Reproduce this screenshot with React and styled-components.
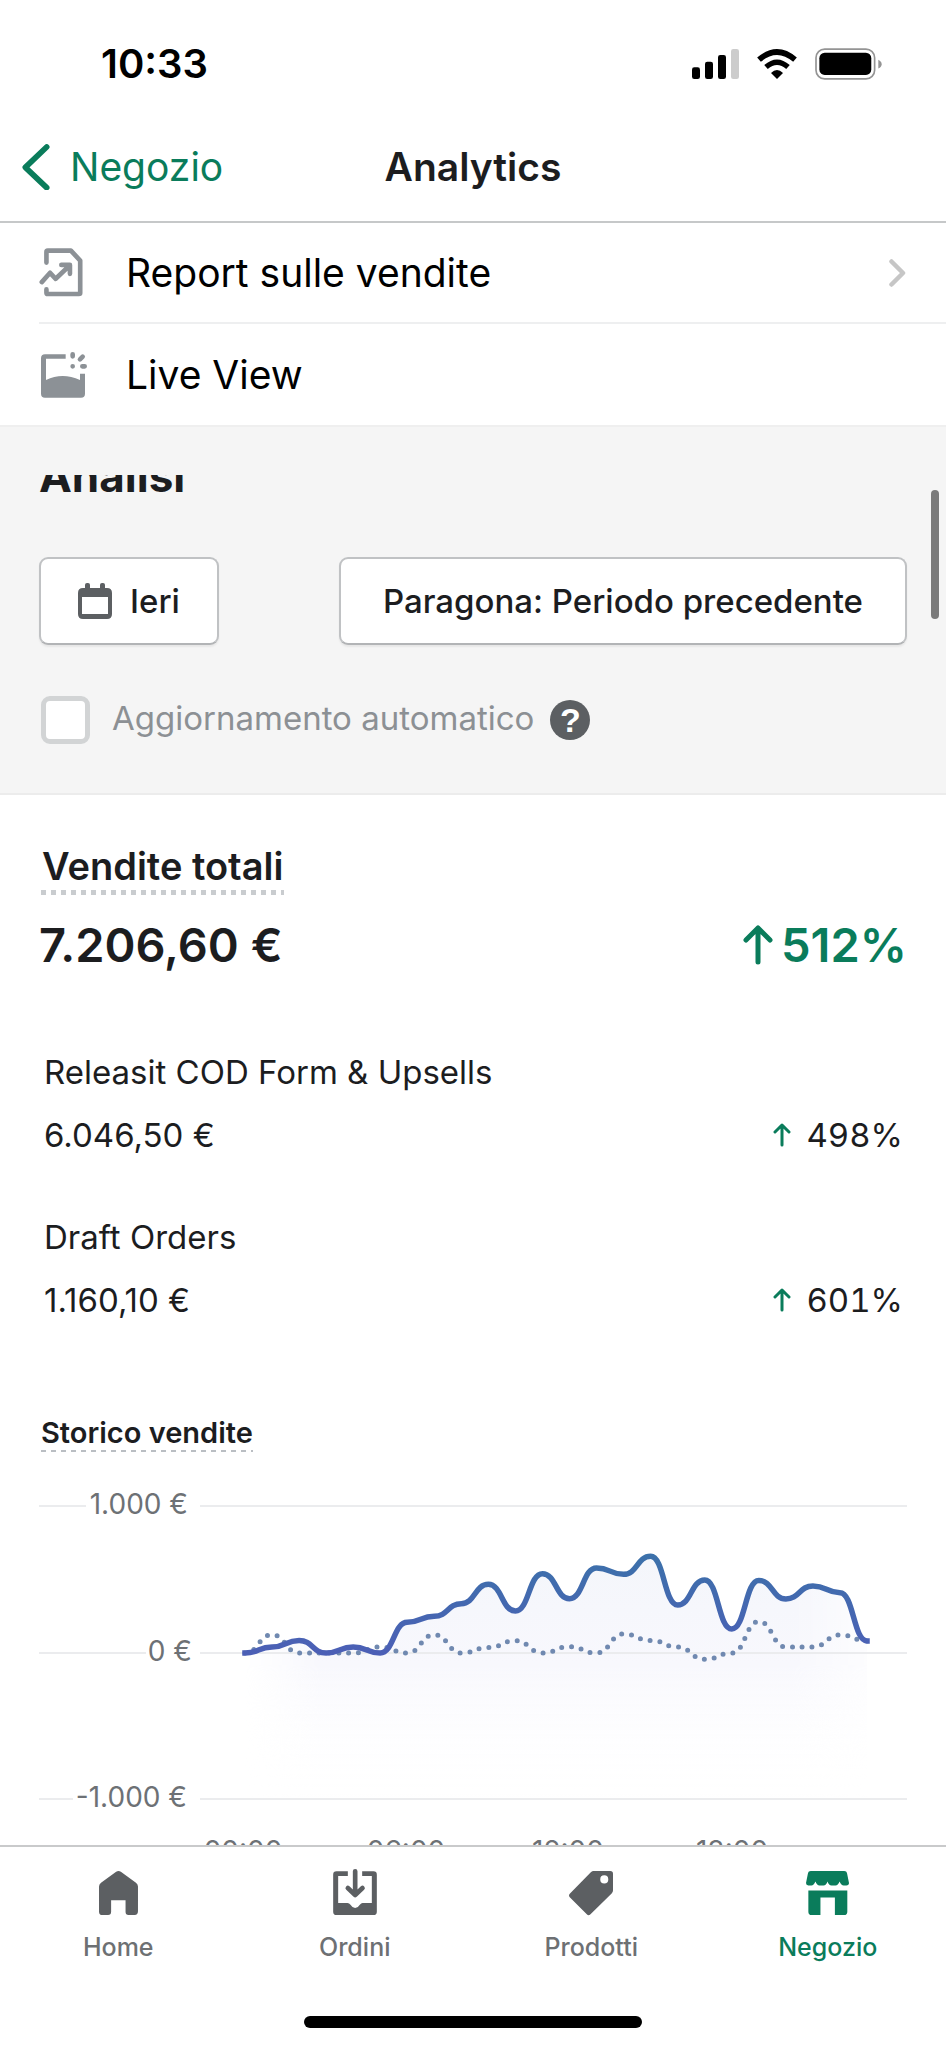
import React from "react";
import styled, { createGlobalStyle, css } from "styled-components";

const GlobalStyle = createGlobalStyle`
  *, *::before, *::after { box-sizing: border-box; }
  body { margin: 0; background: #fff; }
  h1, h2, h3, p, dl, dd, dt, ul { margin: 0; padding: 0; font: inherit; }
  button { font: inherit; color: inherit; cursor: pointer; }
  svg { display: block; flex: none; }
`;

const GREEN = "#0a7c5b";
const INK = "#1c1d1f";
const ICON = "#5c5f62";

const Screen = styled.div`
  height: 100vh;
  display: flex;
  flex-direction: column;
  background: #fff;
  color: ${INK};
  font-family: Inter, "Liberation Sans", sans-serif;
  overflow: hidden;
`;

const StatusBar = styled.div`
  flex: none;
  height: 113px;
  padding: 14px 64px 0 101px;
  display: flex;
  align-items: center;
  justify-content: space-between;
  color: #000;
`;

const Clock = styled.time`
  font-size: 40px;
  font-weight: 600;
  line-height: 48px;
`;

const StatusIcons = styled.div`
  display: flex;
  align-items: center;
  gap: 18px;
`;

const NavBar = styled.header`
  flex: none;
  height: 110px;
  padding: 0 22px;
  display: grid;
  grid-template-columns: 1fr auto 1fr;
  align-items: center;
  border-bottom: 2px solid #c6c8c9;
  font-size: 39px;
  line-height: 48px;
`;

const BackLink = styled.a`
  display: flex;
  align-items: center;
  gap: 18px;
  color: ${GREEN};
  text-decoration: none;
`;

const NavTitle = styled.h1`
  font-weight: 600;
`;

const Main = styled.main`
  position: relative;
  flex: 1;
  min-height: 0;
  overflow: hidden;
`;

const ScrollThumb = styled.div`
  position: absolute;
  top: 267px;
  right: 7px;
  width: 8px;
  height: 129px;
  border-radius: 4px;
  background: #7b7b7b;
`;

const MenuRow = styled.a`
  margin-left: 39px;
  height: 101px;
  padding-right: 40px;
  display: grid;
  grid-template-columns: 87px 1fr auto;
  align-items: center;
  border-bottom: ${(p) => (p.$last ? "0" : "2px solid #eeeff0")};
  color: #000;
  text-decoration: none;
  font-size: 39px;
  line-height: 48px;
`;

const FilterPanel = styled.section`
  padding: 50px 39px 49px;
  background: #f5f5f5;
  border-bottom: 2px solid #ececec;
  box-shadow: inset 0 2px #efefef;
`;

const ClippedHeading = styled.div`
  height: 25px;
  display: flex;
  align-items: flex-end;
  overflow: hidden;
  margin-bottom: 57px;
`;

const PanelTitle = styled.h2`
  font-size: 44px;
  font-weight: 700;
  line-height: 48px;
`;

const ButtonRow = styled.div`
  display: flex;
  justify-content: space-between;
`;

const FilterButton = styled.button`
  height: 88px;
  padding: 0 ${(p) => (p.$wide ? 42 : 37)}px;
  display: flex;
  align-items: center;
  gap: 18px;
  background: #fff;
  border: 2px solid #c0c2c4;
  border-bottom-color: #b2b4b6;
  border-radius: 9px;
  box-shadow: 0 2px 2px rgba(0, 0, 0, 0.06);
  font-size: 33px;
  font-weight: 500;
  line-height: 40px;
`;

const AutoRefresh = styled.div`
  margin-top: 51px;
  height: 48px;
  padding-left: 2px;
  display: flex;
  align-items: center;
`;

const Checkbox = styled.input`
  appearance: none;
  flex: none;
  width: 49px;
  height: 48px;
  margin: 0 22px 0 0;
  background: #fff;
  border: 5px solid #d2d4d5;
  border-radius: 9px;
`;

const CheckLabel = styled.label`
  padding-bottom: 4px;
  color: #8c9094;
  font-size: 33px;
  line-height: 40px;
`;

const HelpButton = styled.button`
  width: 40px;
  height: 40px;
  margin-left: 16px;
  padding: 0;
  border: 0;
  border-radius: 50%;
  background: ${ICON};
  color: #fff;
  font-family: "Liberation Sans", sans-serif;
  font-size: 34px;
  font-weight: 700;
  line-height: 40px;
`;

const Report = styled.section`
  padding: 47px 39px 0;
`;

const ReportTitle = styled.h2`
  width: fit-content;
  margin-left: 2px;
  padding: 0 1px 5px;
  font-size: 38px;
  font-weight: 600;
  line-height: 48px;
  background: repeating-linear-gradient(90deg, #c9cccf 0 5px, transparent 5px 10px) left bottom / 100% 5px no-repeat;
`;

const Split = styled.div`
  display: flex;
  justify-content: space-between;
  align-items: center;
`;

const Total = styled(Split)`
  margin-top: 22px;
  font-size: 47px;
  font-weight: 600;
  line-height: 56px;
`;

const Change = styled.span`
  display: flex;
  align-items: center;
  gap: ${(p) => (p.$large ? 8 : 15)}px;
  font-variant-numeric: ${(p) => (p.$large ? "normal" : "tabular-nums")};
  ${(p) => p.$large && css`color: ${GREEN};`}
`;

const Channels = styled.dl`
  margin-top: 79px;
  padding: 0 4px 0 5px;
  display: grid;
  gap: 62px;
  font-size: 33px;
  line-height: 40px;
`;

const ChannelAmounts = styled.dd`
  display: flex;
  justify-content: space-between;
  padding-top: 23px !important;
`;

const ChartTitle = styled.h3`
  width: fit-content;
  margin: 96px 0 28px 2px;
  padding-bottom: 2px;
  font-size: 29px;
  font-weight: 600;
  line-height: 34px;
  background: repeating-linear-gradient(90deg, #babec3 0 5px, transparent 5px 10px) left bottom / 100% 2px no-repeat;
`;

const ChartSvg = styled.svg`
  width: 100%;
  height: auto;
  overflow: visible;
`;

const AxisText = styled.text`
  fill: #6d7175;
  font-size: 28px;
  text-anchor: ${(p) => p.$anchor || "start"};
`;

const TabBar = styled.nav`
  flex: none;
  padding-bottom: 20px;
  border-top: 2px solid #c9cacb;
  background: #fff;
`;

const Tabs = styled.div`
  display: grid;
  grid-template-columns: repeat(4, 1fr);
`;

const Tab = styled.a`
  padding-top: 21px;
  display: flex;
  flex-direction: column;
  align-items: center;
  gap: 16px;
  color: ${(p) => (p.$active ? GREEN : ICON)};
  text-decoration: none;
  font-size: 25px;
  font-weight: 500;
  line-height: 30px;
`;

const TabLabel = styled.span`
  color: ${(p) => (p.$active ? GREEN : "#6d7073")};
`;

const TabIcon = styled.span`
  height: 48px;
  display: flex;
  align-items: flex-end;
`;

const HomeIndicator = styled.div`
  width: 338px;
  height: 12px;
  margin: 54px auto 0;
  border-radius: 6px;
  background: #000;
`;

function SignalIcon() {
  return (
    <svg width="47" height="30" viewBox="0 0 141 90" aria-hidden="true">
      <rect x="0" y="55" width="24" height="35" rx="7" />
      <rect x="39" y="38" width="24" height="52" rx="7" />
      <rect x="78" y="18" width="24" height="72" rx="7" />
      <rect x="117" y="0" width="24" height="90" rx="7" fill="#ccc" />
    </svg>
  );
}

function WifiIcon() {
  return (
    <svg width="40" height="30" viewBox="0 0 120 90" fill="none" stroke="#000" aria-hidden="true">
      <path d="M6 32Q60 -14 114 32" strokeWidth="17" />
      <path d="M27 54Q60 25 93 54" strokeWidth="16" />
      <path d="M60 90L42 72Q60 54 78 72Z" fill="#000" stroke="none" />
    </svg>
  );
}

function BatteryIcon() {
  return (
    <svg width="67" height="32" viewBox="0 0 200 95" aria-hidden="true">
      <rect x="3" y="3" width="175" height="89" rx="26" fill="none" stroke="#949494" strokeWidth="5" />
      <rect x="13" y="14" width="155" height="66" rx="16" />
      <path d="M189 35Q199 40 199 48Q199 56 189 61Z" fill="#949494" />
    </svg>
  );
}

function BackIcon() {
  return (
    <svg width="30" height="46" viewBox="0 0 90 138" fill="none" stroke="currentColor" strokeWidth="17" strokeLinecap="round" strokeLinejoin="round" aria-hidden="true">
      <path d="M74 9L10 70L74 131" />
    </svg>
  );
}

function DisclosureIcon() {
  return (
    <svg width="17" height="28" viewBox="0 0 17 28" fill="none" stroke="#c6c6c6" strokeWidth="4.5" strokeLinecap="round" strokeLinejoin="round" aria-hidden="true">
      <path d="M2.5 2.5L14 14L2.5 25.5" />
    </svg>
  );
}

function ReportIcon() {
  return (
    <svg width="44" height="49" viewBox="0 0 132 148" fill="none" stroke="#8c9196" strokeWidth="14" strokeLinecap="round" strokeLinejoin="round" aria-hidden="true">
      <path d="M22 44V12Q22 8 26 8H96L124 38V136Q124 139 120 139H26Q22 139 22 135V125" />
      <path d="M8 103L33 75L50 93L92 53M67 51H93V78" />
    </svg>
  );
}

function LiveViewIcon() {
  return (
    <svg width="48" height="46" viewBox="-6 0 144 138" fill="#8c9196" aria-hidden="true">
      <path d="M0 19Q0 7 12 7H74V20H15V84Q64 60 117 84V65H132V125Q132 137 120 137H12Q0 137 0 125Z" />
      <path d="M95 7V13M95 43V43M117 22L125 14M124 43H131" stroke="#8c9196" strokeWidth="14" strokeLinecap="round" />
    </svg>
  );
}

function CalendarIcon() {
  return (
    <svg width="34" height="36" viewBox="0 0 34 36" fill={ICON} aria-hidden="true">
      <path fillRule="evenodd" d="M5 5H29Q34 5 34 10V31Q34 36 29 36H5Q0 36 0 31V10Q0 5 5 5ZM4 14V31H30V14Z" />
      <rect x="7" y="0" width="5" height="9" rx="2" />
      <rect x="22" y="0" width="5" height="9" rx="2" />
    </svg>
  );
}

function ArrowUp({ large }) {
  return large ? (
    <svg width="30" height="40" viewBox="0 0 30 40" fill="none" stroke={GREEN} strokeWidth="5" strokeLinecap="round" strokeLinejoin="round" aria-hidden="true">
      <path d="M15 37V3M3 15L15 3L27 15" />
    </svg>
  ) : (
    <svg width="18" height="24" viewBox="0 0 18 24" fill="none" stroke={GREEN} strokeWidth="3" strokeLinecap="round" strokeLinejoin="round" aria-hidden="true">
      <path d="M9 22V2M2 9L9 2L16 9" />
    </svg>
  );
}

function HomeIcon() {
  return (
    <svg width="39" height="45" viewBox="0 0 116 134" fill="currentColor" aria-hidden="true">
      <path d="M51 2Q58 -2 65 2L110 35Q116 40 116 46V120Q116 131 106 131H88Q79 131 79 122V87H36V122Q36 131 27 131H10Q0 131 0 121V46Q0 40 6 35Z" />
    </svg>
  );
}

function OrdersIcon() {
  return (
    <svg width="44" height="47" viewBox="0 0 131 141" fill="currentColor" aria-hidden="true">
      <path d="M44 7H10Q0 7 0 17V128Q0 138 10 138H121Q131 138 131 128V17Q131 7 121 7H87V21H116V102H88Q84 102 80 107Q74 117 66 117Q58 117 52 107Q48 102 43 102H15V21H44Z" />
      <path d="M66 7V78M44 57L66 78L88 57" fill="none" stroke="currentColor" strokeWidth="14" strokeLinecap="round" strokeLinejoin="round" />
    </svg>
  );
}

function ProductsIcon() {
  return (
    <svg width="44" height="45" viewBox="0 0 131 134" fill="currentColor" aria-hidden="true">
      <path fillRule="evenodd" d="M73 0H123Q131 0 131 8V58Q131 63 127 67L64 129Q58 134 53 129L3 79Q-3 73 3 67L65 4Q69 0 73 0ZM105 13A12 12 0 1 0 105 37A12 12 0 1 0 105 13Z" />
    </svg>
  );
}

function StoreIcon() {
  return (
    <svg width="43" height="45" viewBox="0 0 128 134" fill="currentColor" aria-hidden="true">
      <path d="M14 0H114Q121 0 122 6L128 36Q128 43 120 43H112Q105 43 100 31Q95 43 88 43H76Q68 43 64 31Q60 43 52 43H40Q33 43 28 31Q23 43 16 43H7Q0 43 0 36L6 6Q7 0 14 0Z" />
      <path d="M7 58H123V121Q123 131 113 131H86V79H43V131H17Q7 131 7 121Z" />
    </svg>
  );
}

const SALES = [0, 41, 86, 0, 41, 0, 209, 250, 336, 468, 286, 541, 370, 580, 536, 659, 327, 498, 164, 495, 368, 457, 411, 82];
const PREVIOUS = [0, 125, 0, 0, 0, 41, 0, 125, 0, 38, 84, 0, 43, 0, 130, 86, 41, -43, 0, 214, 41, 41, 123, 82];

const CHART = { left: 206, right: 828, zero: 173, bottom: 319, perEuro: 0.1467 };

// Smooth hourly curve whose tangent is level at every point.
function curve(values) {
  const step = (CHART.right - CHART.left) / (values.length - 1);
  const at = (i) => [CHART.left + i * step, CHART.zero - values[i] * CHART.perEuro];
  return values.reduce((d, _, i) => {
    const [x, y] = at(i);
    if (i === 0) return `M${x} ${y}`;
    const [px, py] = at(i - 1);
    const mid = (px + x) / 2;
    return `${d}C${mid} ${py} ${mid} ${y} ${x} ${y}`;
  }, "");
}

const GRID = [
  { label: "1.000 €", y: 26, end: 149, lineEnd: 47 },
  { label: "0 €", y: 173, end: 153, lineEnd: 107 },
  { label: "-1.000 €", y: 319, end: 148, lineEnd: 34 },
];

const HOURS = [
  { label: "00:00", x: 204 },
  { label: "06:00", x: 367 },
  { label: "12:00", x: 529 },
  { label: "18:00", x: 693 },
];

function SalesChart() {
  const line = curve(SALES);
  return (
    <ChartSvg viewBox="0 0 868 390" role="img" aria-label="Storico vendite">
      <defs>
        <linearGradient id="stroke" gradientUnits="userSpaceOnUse" x1="0" y1="75" x2="0" y2="175">
          <stop offset="0" stopColor="#3c71aa" />
          <stop offset="1" stopColor="#4c5fb6" />
        </linearGradient>
        <linearGradient id="area" gradientUnits="userSpaceOnUse" x1="0" y1="75" x2="0" y2="319">
          <stop offset="0" stopColor="#f4f6fb" />
          <stop offset="0.45" stopColor="#f8f8fd" />
          <stop offset="1" stopColor="#ffffff" stopOpacity="0" />
        </linearGradient>
        <linearGradient id="fade" x1="0" x2="1" y1="0" y2="0">
          <stop offset="0" stopColor="#000" />
          <stop offset="0.12" stopColor="#fff" />
          <stop offset="0.88" stopColor="#fff" />
          <stop offset="1" stopColor="#555" />
        </linearGradient>
        <mask id="edges">
          <rect x={CHART.left} y="0" width={CHART.right - CHART.left} height={CHART.bottom} fill="url(#fade)" />
        </mask>
      </defs>
      <path d={`${line}V${CHART.bottom}H${CHART.left}Z`} fill="url(#area)" mask="url(#edges)" />
      {GRID.map((g) => (
        <g key={g.label}>
          <path d={`M0 ${g.y}H${g.lineEnd}M161 ${g.y}H868`} stroke="#ebecee" strokeWidth="2" />
          <AxisText x={g.end} y={g.y + 8} $anchor="end">{g.label}</AxisText>
        </g>
      ))}
      <path d={curve(PREVIOUS)} fill="none" stroke="#7089b0" strokeWidth="5" strokeLinecap="round" strokeDasharray="0 9.8" />
      <path d={line} fill="none" stroke="url(#stroke)" strokeWidth="5.5" strokeLinecap="square" />
      {HOURS.map((h) => (
        <AxisText key={h.label} x={h.x} y="381" $anchor="middle">{h.label}</AxisText>
      ))}
    </ChartSvg>
  );
}

const CHANNELS = [
  { name: "Releasit COD Form & Upsells", amount: "6.046,50 €", change: "498%" },
  { name: "Draft Orders", amount: "1.160,10 €", change: "601%" },
];

const TABS = [
  { label: "Home", Icon: HomeIcon },
  { label: "Ordini", Icon: OrdersIcon },
  { label: "Prodotti", Icon: ProductsIcon },
  { label: "Negozio", Icon: StoreIcon, active: true },
];

export default function App() {
  return (
    <Screen>
      <GlobalStyle />
      <StatusBar>
        <Clock>10:33</Clock>
        <StatusIcons>
          <SignalIcon />
          <WifiIcon />
          <BatteryIcon />
        </StatusIcons>
      </StatusBar>
      <NavBar>
        <BackLink href="#negozio">
          <BackIcon />
          Negozio
        </BackLink>
        <NavTitle>Analytics</NavTitle>
      </NavBar>

      <Main>
        <MenuRow href="#report">
          <ReportIcon />
          Report sulle vendite
          <DisclosureIcon />
        </MenuRow>
        <MenuRow href="#live" $last>
          <LiveViewIcon />
          Live View
        </MenuRow>

        <FilterPanel>
          <ClippedHeading>
            <PanelTitle>Analisi</PanelTitle>
          </ClippedHeading>
          <ButtonRow>
            <FilterButton type="button">
              <CalendarIcon />
              Ieri
            </FilterButton>
            <FilterButton type="button" $wide>Paragona: Periodo precedente</FilterButton>
          </ButtonRow>
          <AutoRefresh>
            <Checkbox type="checkbox" id="auto-refresh" disabled />
            <CheckLabel htmlFor="auto-refresh">Aggiornamento automatico</CheckLabel>
            <HelpButton type="button">?</HelpButton>
          </AutoRefresh>
        </FilterPanel>

        <Report>
          <ReportTitle>Vendite totali</ReportTitle>
          <Total>
            <span>7.206,60 €</span>
            <Change $large>
              <ArrowUp large />
              512%
            </Change>
          </Total>
          <Channels>
            {CHANNELS.map((c) => (
              <div key={c.name}>
                <dt>{c.name}</dt>
                <ChannelAmounts>
                  <span>{c.amount}</span>
                  <Change>
                    <ArrowUp />
                    {c.change}
                  </Change>
                </ChannelAmounts>
              </div>
            ))}
          </Channels>
          <ChartTitle>Storico vendite</ChartTitle>
          <SalesChart />
        </Report>
        <ScrollThumb />
      </Main>

      <TabBar>
        <Tabs>
          {TABS.map(({ label, Icon, active }) => (
            <Tab key={label} href={`#${label.toLowerCase()}`} $active={active}>
              <TabIcon>
                <Icon />
              </TabIcon>
              <TabLabel $active={active}>{label}</TabLabel>
            </Tab>
          ))}
        </Tabs>
        <HomeIndicator />
      </TabBar>
    </Screen>
  );
}
